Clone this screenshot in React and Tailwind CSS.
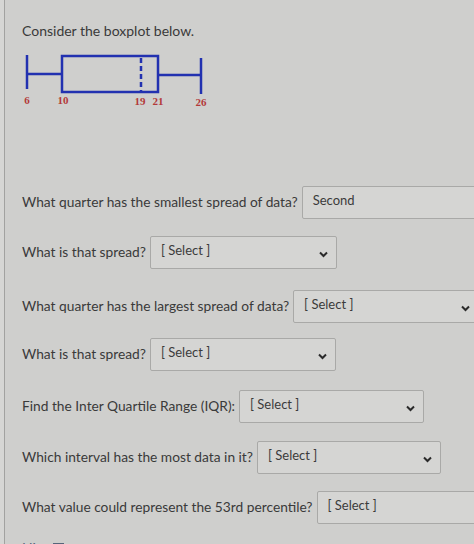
import React from "react";

const Chevron = () => (
  <svg width="9" height="7" viewBox="0 0 9 7" className="shrink-0">
    <path d="M1 1.5 L4.5 5 L8 1.5" fill="none" stroke="#2a2a2a" strokeWidth="2" />
  </svg>
);

const SelectBox = ({ width, value = "[ Select ]", chevron = true }) => (
  <div
    className="h-[33px] shrink-0 flex items-center justify-between pl-[10px] pr-[8px] border border-[#a9a9a7] rounded-[2px] bg-[#d5d5d3] text-[13px] text-[#3b3b3b]"
    style={{ width }}
  >
    <span className="-mt-[3px]">{value}</span>
    {chevron && (
      <span className="mt-[3px]">
        <Chevron />
      </span>
    )}
  </div>
);

const Row = ({ label, width, value, chevron, mt }) => (
  <div className={`flex items-center gap-[4px] whitespace-nowrap ${mt}`}>
    <span className="text-[13.75px] text-[#3a3a3a]">{label}</span>
    <SelectBox width={width} value={value} chevron={chevron} />
  </div>
);

const BoxPlot = () => (
  <svg width="200" height="58" viewBox="0 0 200 58" className="-ml-[2px] mt-[10px] block">
    <g stroke="#2231b0" strokeWidth="2.5" fill="none">
      <line x1="7" y1="4" x2="7" y2="38" />
      <line x1="7" y1="23" x2="42" y2="23" />
      <rect x="42" y="5" width="96" height="36" />
      <line x1="121" y1="7" x2="121" y2="41" strokeDasharray="5 3" />
      <line x1="138" y1="24" x2="181" y2="24" />
      <line x1="181" y1="7" x2="181" y2="43" />
    </g>
    <g fill="#b33a3a" fontFamily="'Liberation Serif', serif" fontWeight="bold" fontSize="11" textAnchor="middle">
      <text x="7" y="53">6</text>
      <text x="43" y="53">10</text>
      <text x="120" y="54">19</text>
      <text x="138" y="54">21</text>
      <text x="181" y="55">26</text>
    </g>
  </svg>
);

export default function App() {
  return (
    <div className="w-[474px] h-[544px] overflow-hidden bg-[#cfcfcd] flex" style={{ fontFamily: "Lato, 'Noto Sans', sans-serif" }}>
      <div className="w-[4px] shrink-0 bg-[#d6d6d4]" />
      <div className="w-[1px] shrink-0 bg-[#a2a2a0]" />
      <div className="flex-1 pl-[17px] pt-[21px]">
        <div className="text-[14px] leading-[20px] text-[#3a3a3a]">Consider the boxplot below.</div>
        <BoxPlot />
        <div className="mt-[77px]" />
        <Row label="What quarter has the smallest spread of data?" width={200} value="Second" chevron={false} mt="" />
        <Row label="What is that spread?" width={187} mt="mt-[17px]" />
        <Row label="What quarter has the largest spread of data?" width={186} mt="mt-[21px]" />
        <Row label="What is that spread?" width={186} mt="mt-[15px]" />
        <Row label="Find the Inter Quartile Range (IQR):" width={185} mt="mt-[19px]" />
        <Row label="Which interval has the most data in it?" width={184} mt="mt-[18px]" />
        <Row label="What value could represent the 53rd percentile?" width={200} chevron={false} mt="mt-[17px]" />
        <div className="mt-[13px] flex items-center gap-[4px] text-[14px] text-[#56657a]">
          <span>Hint</span>
          <svg width="11" height="9" viewBox="0 0 11 9">
            <rect x="0.5" y="0.5" width="10" height="8" fill="none" stroke="#56657a" />
            <line x1="2" y1="3" x2="9" y2="3" stroke="#56657a" />
          </svg>
        </div>
      </div>
    </div>
  );
}
